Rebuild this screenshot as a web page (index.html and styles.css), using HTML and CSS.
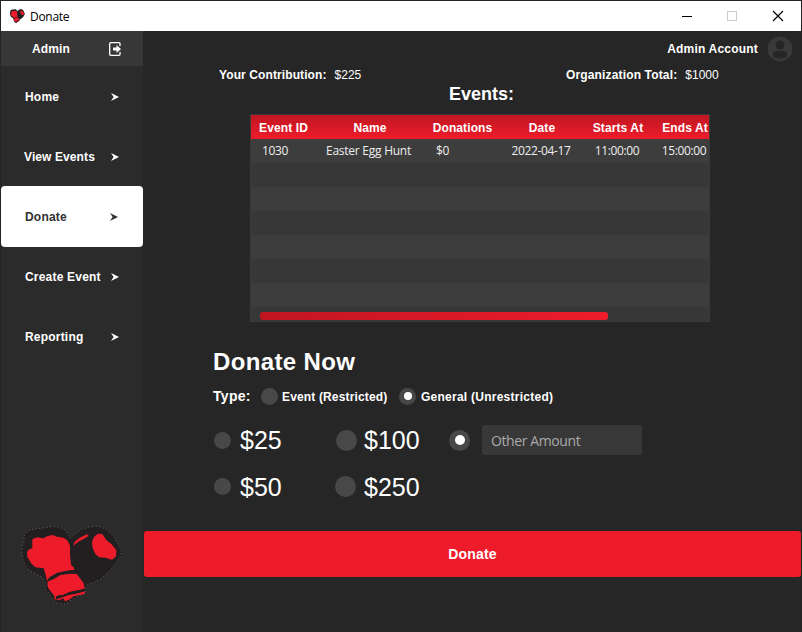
FILE: index.html
```html
<!DOCTYPE html>
<html lang="en">
<head>
<meta charset="utf-8">
<title>Donate</title>
<link rel="stylesheet" href="styles.css">
</head>
<body>
<svg width="0" height="0" class="defs" aria-hidden="true">
  <symbol id="gloves" viewBox="0 0 345 270" preserveAspectRatio="none">
    <path class="glove-dark" d="M27 48L33 38L45 29L78 25L118 19L135 22L148 28L157 40L165 56L180 42L200 28L224 21L242 19L258 21L275 29L287 38L299 54L307 70L319 88L319 107L302 130L288 150L270 165L256 178L237 187L218 194L211 205L210 221L190 228L172 238L153 252L121 249L112 234L102 220L91 207L91 190L83 172L57 159L43 151L31 137L24 120L20 95L22 75L28 62Z"/>
    <path class="glove-red" d="M52 58L65 52L85 55L98 48L112 45L129 51L146 53L158 62L165 77L165 103L168 134L177 143L178 149L155 152L127 158L103 172L96 183L92 164L86 145L62 142L50 132L37 110L36 97L41 89L52 84Z"/>
    <path class="glove-red" d="M98 185L118 176L136 165L165 161L185 162L196 176L206 190L209 206L191 210L165 215L143 225L127 231L119 241L118 228L100 205L97 193Z"/>
    <path class="glove-red" d="M122 239L147 230L160 225L180 222L210 214L209 221L194 225L176 229L162 239L150 244L145 235L132 241Z"/>
    <path class="glove-line" d="M123 232L139 226M151 226L165 220L180 217L207 211"/>
    <path class="glove-red" d="M175 78L179 65L194 53L216 43L221 48L207 56L190 65Z"/>
    <path class="glove-red" d="M231 66L237 51L248 41L262 42L274 60L290 73L304 91L303 109L291 119L271 113L253 112L241 102L233 84Z"/>
  </symbol>
  <symbol id="arrow" viewBox="0 0 8 8"><path d="M0 0L8 4L0 8L2.600 4Z"/></symbol>
</svg>
<div class="window">
  <header class="titlebar">
    <svg class="app-icon"><use href="#gloves"/></svg>
    <span class="app-title">Donate</span>
    <svg class="controls" viewBox="0 0 104 12">
      <path d="M1 6.500H11" stroke="#000"/>
      <rect x="46.500" y="1.500" width="9" height="9" fill="none" stroke="#ccc"/>
      <path d="M92 1L102 11M102 1L92 11" stroke="#000" stroke-width="1.200"/>
    </svg>
  </header>
  <div class="body">
    <aside class="sidebar">
      <div class="user"><span>Admin</span>
        <svg class="exit" viewBox="0 0 12 14"><path d="M11 4V1.700Q11 .7 10 .7H1.700Q.7 .7 .7 1.700V12.300Q.7 13.300 1.700 13.300H10Q11 13.300 11 12.300V10" fill="none" stroke="#fff" stroke-width="1.300"/><path d="M4 5.500H7.500V3L12 7L7.500 11V8.500H4Z" fill="#fff"/></svg>
      </div>
      <nav>
        <a class="item"><span>Home</span><svg class="arrow"><use href="#arrow"/></svg></a>
        <a class="item view"><span>View Events</span><svg class="arrow"><use href="#arrow"/></svg></a>
        <a class="item active"><span>Donate</span><svg class="arrow"><use href="#arrow"/></svg></a>
        <a class="item"><span>Create Event</span><svg class="arrow"><use href="#arrow"/></svg></a>
        <a class="item"><span>Reporting</span><svg class="arrow"><use href="#arrow"/></svg></a>
      </nav>
      <svg class="logo"><use href="#gloves"/></svg>
    </aside>
    <main>
      <div class="account"><span>Admin Account</span>
        <svg class="avatar" viewBox="0 0 26 26"><circle cx="13" cy="13" r="12.500" fill="#393939"/><circle cx="13" cy="9" r="4.500" fill="#262626"/><path d="M5.500 19Q6 14.800 13 14.800T20.500 19Q18 22.500 13 22.500T5.500 19Z" fill="#262626"/></svg>
      </div>
      <div class="totals">
        <div><b>Your Contribution:</b><span>$225</span></div>
        <div><b>Organization Total:</b><span>$1000</span></div>
      </div>
      <h2>Events:</h2>
      <div class="table">
        <div class="row head"><span>Event ID</span><span>Name</span><span>Donations</span><span>Date</span><span>Starts At</span><span>Ends At</span></div>
        <div class="row data"><span class="id">1030</span><span class="name">Easter Egg Hunt</span><span class="amount">$0</span><span>2022-04-17</span><span>11:00:00</span><span>15:00:00</span></div>
        <div class="row"></div><div class="row"></div><div class="row"></div><div class="row"></div><div class="row"></div><div class="row"></div>
        <div class="track"><div class="thumb"></div></div>
      </div>
      <h1>Donate Now</h1>
      <div class="types">
        <span class="type-label">Type:</span>
        <i class="radio"></i><b class="restricted">Event (Restricted)</b>
        <i class="radio on"></i><b class="general">General (Unrestricted)</b>
      </div>
      <div class="amounts">
        <label><i class="radio"></i>$25</label>
        <label><i class="radio large"></i>$100</label>
        <div class="other"><i class="radio large on"></i><input type="text" placeholder="Other Amount"></div>
        <label><i class="radio"></i>$50</label>
        <label class="last"><i class="radio large"></i>$250</label>
      </div>
      <button class="donate">Donate</button>
    </main>
  </div>
</div>
</body>
</html>
```
FILE: styles.css
```css
* { box-sizing: border-box; }
body { margin: 0; background: #262626; font: 12px "Liberation Sans", Arial, sans-serif; color: #fff; }
.defs { position: absolute; }
.glove-dark { fill: #231f20; stroke: #858585; stroke-width: 2; stroke-dasharray: 3 8; }
.glove-red { fill: #ee1c2b; }
.glove-line { fill: none; stroke: #231f20; stroke-width: 5; }
.window { width: 802px; height: 632px; border: 1px solid #252525; border-bottom: 0; display: flex; flex-direction: column; overflow: hidden; }
.titlebar { height: 30px; flex: none; background: #fff; color: #000; display: flex; align-items: center; font: 12px "Open Sans", sans-serif; }
.app-icon { width: 17px; height: 16px; margin-left: 8px; }
.app-icon .glove-dark { stroke: none; }
.app-title { margin: 0 0 0 4px; letter-spacing: -.3px; }
.controls { width: 104px; height: 12px; margin-left: auto; margin-right: 16px; }
.body { flex: 1; display: flex; }
.sidebar { width: 142px; background: #2b2b2b; display: flex; flex-direction: column; font-weight: bold; letter-spacing: .2px; }
.user { height: 35px; background: #373737; display: flex; align-items: center; justify-content: space-between; padding: 0 22px 0 31px; letter-spacing: .1px; }
.exit { width: 12px; height: 14px; }
.item { height: 60px; display: flex; align-items: center; justify-content: space-between; padding: 2px 24px 0 24px; white-space: nowrap; }
.view { padding-left: 23px; letter-spacing: .1px; }
.item.active { height: 61px; margin-bottom: -1px; background: #fff; color: #303030; border-radius: 4px; padding-right: 25px; padding-top: 0; }
.arrow { width: 8px; height: 8px; fill: currentColor; flex: none; }
.logo { width: 115px; height: 90px; flex: none; margin: 154px 0 0 14px; }
main { flex: 1; min-width: 0; display: flex; flex-direction: column; }
.account { height: 35px; display: flex; align-items: center; justify-content: flex-end; gap: 9px; padding-right: 8px; font-weight: bold; letter-spacing: .2px; }
.avatar { width: 26px; height: 26px; }
.totals { height: 18px; display: grid; grid-template-columns: 347px 1fr; padding-left: 76px; align-items: center; }
.totals b { letter-spacing: .1px; }
.totals div + div b { letter-spacing: .15px; }
.totals span { margin-left: 8px; }
h2 { font-size: 18px; line-height: 20px; margin: 0 0 10px 306px; }
.table { width: 460px; height: 208px; margin-left: 107px; border: 1px solid #3a3a3a; background: #373737; overflow: hidden; }
.row { height: 24px; width: 480px; display: grid; grid-template-columns: 65px 108px 77px 82px 70px 64px; align-items: center; text-align: center; white-space: nowrap; }
.row:nth-child(even) { background: #3d3d3d; }
.head { background: linear-gradient(#c01622, #ee1c2b); font-weight: bold; letter-spacing: .1px; padding-top: 2px; }
.data { font: 12px "Open Sans", sans-serif; letter-spacing: -.35px; color: #eee; padding-bottom: 1px; }
.data span { margin-left: -2px; }
.data .name { margin-left: -3px; letter-spacing: -.25px; }
.id { padding-right: 15px; }
.amount { text-align: left; padding-left: 14px; }
.track { height: 14px; padding: 5px 0 0 9px; }
.thumb { width: 348px; height: 8px; border-radius: 3px; background: linear-gradient(90deg, #c01622, #ee1c2b); }
h1 { font-size: 24px; line-height: 30px; letter-spacing: .35px; margin: 25px 0 0 70px; }
.types { height: 24px; margin: 7px 0 1px 70px; display: flex; align-items: center; }
.types b { padding-top: 2px; }
.type-label { font-size: 14px; font-weight: bold; width: 48px; letter-spacing: .3px; }
.radio { width: 17px; height: 17px; flex: none; border-radius: 50%; background: #484848; display: flex; align-items: center; justify-content: center; }
.radio.large { width: 21px; height: 21px; }
.radio.on::after { content: ""; width: 8px; height: 8px; border-radius: 50%; background: #fff; }
.radio.large.on::after { width: 10px; height: 10px; }
.restricted { width: 117px; margin-left: 4px; letter-spacing: .15px; }
.general { margin-left: 5px; letter-spacing: .25px; }
.amounts { margin: 8px 0 0 71px; display: grid; grid-template-columns: 122px 114px 200px; grid-template-rows: 46px 47px; align-items: center; }
.amounts label { display: flex; align-items: center; gap: 9px; font-size: 25px; line-height: 28px; }
.amounts .radio.large { margin-right: -2px; }
.last { margin-left: -1px; }
.amounts .last .radio { margin-right: -1px; }
.other { display: flex; align-items: center; gap: 12px; margin-left: -1px; }
.amounts .other .radio { margin-right: 0; }
.other input { width: 160px; height: 30px; border: 0; border-radius: 3px; background: #383838; padding: 0 9px; color: #fff; font: 14px "Open Sans", sans-serif; letter-spacing: -.4px; }
.other input::placeholder { color: #aaa; }
.donate { height: 46px; margin: 21px 0 0 1px; border: 0; border-radius: 3px; background: #ee1c2b; color: #fff; font: bold 14px "Liberation Sans", Arial, sans-serif; letter-spacing: .15px; }
```
